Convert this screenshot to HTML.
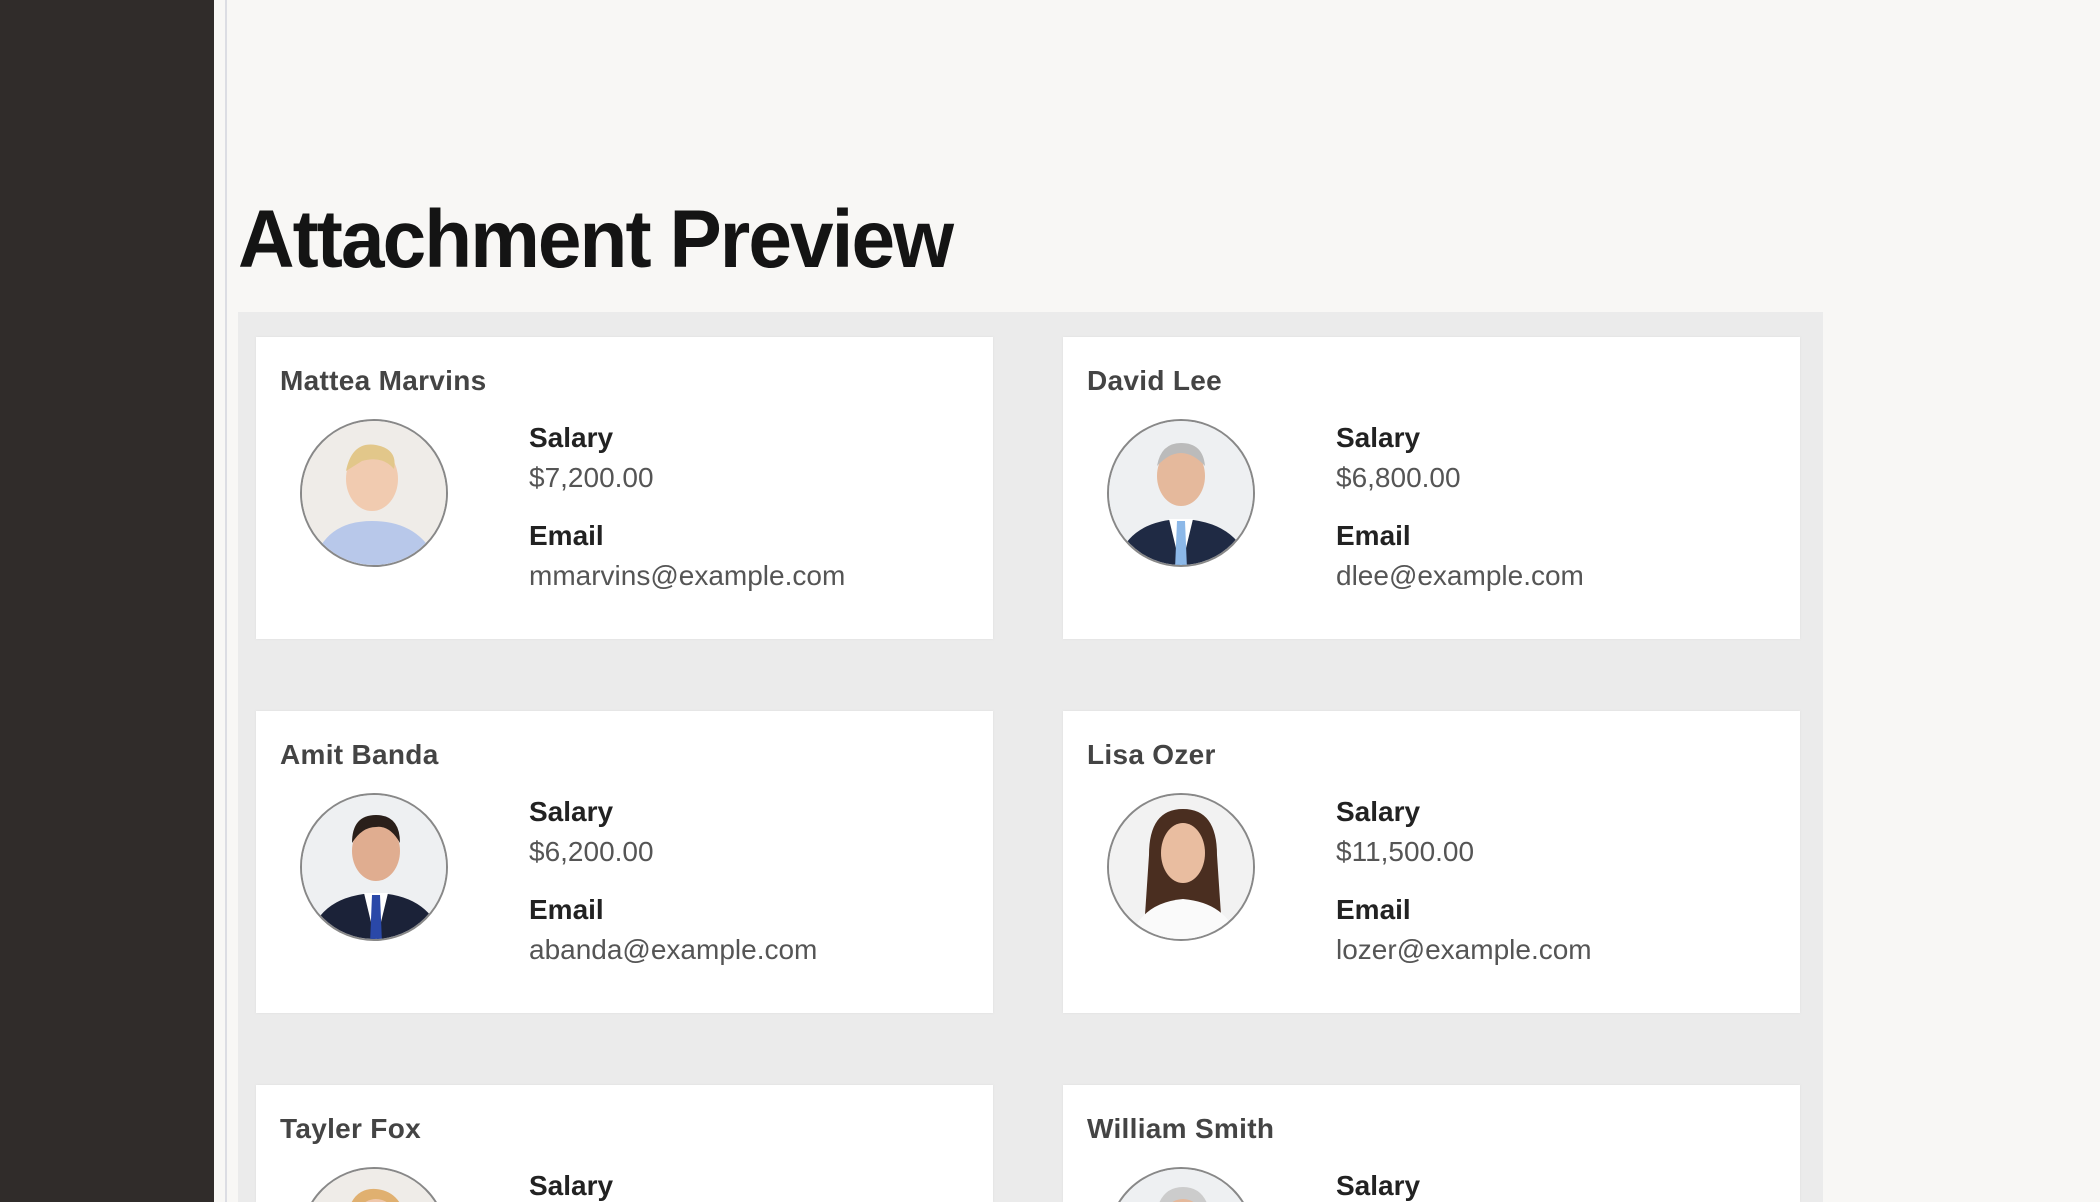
<!DOCTYPE html>
<html><head><meta charset="utf-8"><style>
*{margin:0;padding:0;box-sizing:border-box}
html,body{width:2100px;height:1202px;overflow:hidden}
body{background:#f8f7f5;font-family:"Liberation Sans",sans-serif}
.wrap{position:relative;width:2100px;height:1202px;overflow:hidden}
.side{position:absolute;left:0;top:0;width:214px;height:1202px;background:#302c2a}
.vl{position:absolute;left:225px;top:0;width:2px;height:1202px;background:#dcdde3}
h1{position:absolute;left:238px;top:199px;font-size:82px;font-weight:bold;color:#141414;letter-spacing:-2px;transform:scaleX(0.955);transform-origin:left top;white-space:nowrap;line-height:1}
.box{position:absolute;left:238px;top:312px;width:1585px;height:890px;background:#ebebeb}
.card{position:absolute;width:737px;height:302px;background:#fff;box-shadow:0 0 2px #ddd;overflow:hidden}
.name{position:absolute;left:24px;top:28px;font-size:28px;font-weight:bold;color:#444;letter-spacing:0.3px}
.av{position:absolute;left:44px;top:82px;width:148px;height:148px;border-radius:50%;border:2px solid #888;overflow:hidden;background:#eee}
.lab{position:absolute;left:273px;font-size:28px;font-weight:bold;color:#222}
.val{position:absolute;left:273px;font-size:28px;color:#555}
</style></head><body><div class="wrap">
<div class="side"></div><div class="vl"></div>
<h1>Attachment Preview</h1>
<div class="box"></div>

<div class="card" style="left:256px;top:337px">
<div class="name">Mattea Marvins</div>
<div class="av"><svg width="148" height="148"><rect width="148" height="148" fill="#efece8"/><ellipse cx="70" cy="58" rx="26" ry="32" fill="#f1cbb0"/><path d="M44 50 Q50 20 74 24 Q96 28 92 48 Q80 34 60 40 Z" fill="#e2c78a"/><path d="M10 148 Q20 100 70 100 Q122 100 138 148Z" fill="#b8c8ea"/></svg></div>
<div class="lab" style="top:85px">Salary</div><div class="val" style="top:125px">$7,200.00</div>
<div class="lab" style="top:183px">Email</div><div class="val" style="top:223px">mmarvins@example.com</div>
</div>

<div class="card" style="left:1063px;top:337px">
<div class="name">David Lee</div>
<div class="av"><svg width="148" height="148"><rect width="148" height="148" fill="#eef0f2"/><ellipse cx="72" cy="55" rx="24" ry="30" fill="#e5b99c"/><path d="M48 45 Q52 22 72 22 Q94 22 96 45 Q84 32 72 32 Q60 32 48 45Z" fill="#bbb"/><path d="M6 148 Q16 100 72 98 Q130 100 142 148Z" fill="#1f2a44"/><path d="M60 98 L72 148 L84 98Z" fill="#fff"/><path d="M68 100 L76 100 L78 148 L66 148Z" fill="#8cb8e8"/></svg></div>
<div class="lab" style="top:85px">Salary</div><div class="val" style="top:125px">$6,800.00</div>
<div class="lab" style="top:183px">Email</div><div class="val" style="top:223px">dlee@example.com</div>
</div>

<div class="card" style="left:256px;top:711px">
<div class="name">Amit Banda</div>
<div class="av"><svg width="148" height="148"><rect width="148" height="148" fill="#eef0f2"/><ellipse cx="74" cy="56" rx="24" ry="30" fill="#e0ad90"/><path d="M50 48 Q50 20 74 20 Q98 20 98 48 Q88 30 74 32 Q60 32 50 48Z" fill="#2a1f1a"/><path d="M6 148 Q16 100 74 98 Q130 100 142 148Z" fill="#1b2238"/><path d="M62 98 L74 148 L86 98Z" fill="#fff"/><path d="M70 100 L78 100 L80 148 L68 148Z" fill="#2a48a8"/></svg></div>
<div class="lab" style="top:85px">Salary</div><div class="val" style="top:125px">$6,200.00</div>
<div class="lab" style="top:183px">Email</div><div class="val" style="top:223px">abanda@example.com</div>
</div>

<div class="card" style="left:1063px;top:711px">
<div class="name">Lisa Ozer</div>
<div class="av"><svg width="148" height="148"><rect width="148" height="148" fill="#f2f2f2"/><path d="M40 60 Q40 14 74 14 Q108 14 108 60 L112 120 L36 120Z" fill="#4a2e20"/><ellipse cx="74" cy="58" rx="22" ry="30" fill="#e9bda0"/><path d="M20 148 Q30 108 74 104 Q120 108 130 148Z" fill="#fafafa"/></svg></div>
<div class="lab" style="top:85px">Salary</div><div class="val" style="top:125px">$11,500.00</div>
<div class="lab" style="top:183px">Email</div><div class="val" style="top:223px">lozer@example.com</div>
</div>

<div class="card" style="left:256px;top:1085px;height:117px">
<div class="name">Tayler Fox</div>
<div class="av"><svg width="148" height="148"><rect width="148" height="148" fill="#efece8"/><path d="M44 50 Q50 18 74 20 Q98 22 104 50Z" fill="#e0b070"/><ellipse cx="74" cy="60" rx="24" ry="30" fill="#f0c8ac"/></svg></div>
<div class="lab" style="top:85px">Salary</div>
</div>

<div class="card" style="left:1063px;top:1085px;height:117px">
<div class="name">William Smith</div>
<div class="av"><svg width="148" height="148"><rect width="148" height="148" fill="#eef0f2"/><path d="M46 50 Q50 18 74 18 Q98 18 102 50Z" fill="#ccc"/><ellipse cx="74" cy="60" rx="24" ry="30" fill="#e5b99c"/></svg></div>
<div class="lab" style="top:85px">Salary</div>
</div>
</div></body></html>
